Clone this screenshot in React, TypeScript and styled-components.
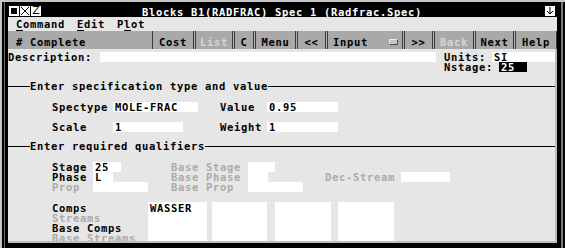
import React from 'react'
import styled, { createGlobalStyle } from 'styled-components'

const GlobalStyle = createGlobalStyle`
  html, body { margin: 0; padding: 0; }
  body {
    width: 565px;
    height: 248px;
    overflow: hidden;
    background: #c6c6c6;
    font-family: "DejaVu Sans Mono", "Liberation Mono", monospace;
    font-weight: bold;
    font-size: 10.5px;
    letter-spacing: 0.68px;
    color: #000;
  }
`

const Window = styled.div`
  box-sizing: border-box;
  width: 563px;
  height: 246px;
  margin: 2px 0 0 2px;
  padding: 1px 8px 5px 6px;
  background: #000;
  box-shadow: inset 2px 0 0 #000, inset 3px 0 0 #6a6a6a, inset -2px 0 0 #000, inset -4px 0 0 #7a7a7a;
  display: flex;
  flex-direction: column;
`

const TitleBar = styled.div`
  display: flex;
  align-items: flex-start;
  height: 14px;
  flex: none;
  background: #000;
  color: #fff;
  padding-left: 1px;
`

const WinButton = styled.span`
  box-sizing: border-box;
  width: 10px;
  height: 10px;
  margin: 3px 1px 0 0;
  background: #fff;
  color: #000;
  display: flex;
  align-items: center;
  justify-content: center;
  flex: none;
`

const Square = styled.span`
  width: 6px;
  height: 6px;
  background: #000;
`

const ZGlyph = styled.span`
  font-family: "DejaVu Sans", sans-serif;
  font-weight: normal;
  font-size: 11px;
  line-height: 10px;
  letter-spacing: 0;
`

const TitleText = styled.span`
  margin-left: 100px;
  padding-top: 4px;
  line-height: 10px;
  white-space: pre;
`

const ArrowBox = styled(WinButton)`
  margin: 3px 2px 0 auto;
`

const MenuBar = styled.div`
  box-sizing: border-box;
  display: flex;
  height: 14px;
  flex: none;
  padding: 2px 0 0 2px;
  background: #e6e6e6;
  line-height: 10px;
`

const MenuItem = styled.span`
  padding: 0 6px;
`

const Mnemonic = styled.span`
  text-decoration: underline;
  text-underline-offset: 2px;
  text-decoration-thickness: 1px;
`

const Toolbar = styled.div`
  display: flex;
  height: 18px;
  flex: none;
  background: #b4b4b4;
`

const Status = styled.div`
  box-sizing: border-box;
  width: 144px;
  padding: 6px 0 0 8px;
  line-height: 10px;
  background: #a9a9a9;
`

const ToolButton = styled.div<{ $w: number; $disabled?: boolean; $last?: boolean; $left?: boolean }>`
  box-sizing: border-box;
  display: flex;
  justify-content: ${p => (p.$left ? 'flex-start' : 'center')};
  width: ${p => p.$w}px;
  height: 18px;
  margin-right: ${p => (p.$last ? 0 : 1)}px;
  padding: 6px 0 0 ${p => (p.$left ? 5 : 0)}px;
  line-height: 10px;
  background: #a9a9a9;
  border-left: 1px solid #3c3c3c;
  border-right: 1px solid #3c3c3c;
  color: ${p => (p.$disabled ? '#d6d6d6' : '#000')};
`

const OptionBox = styled.span`
  box-sizing: border-box;
  width: 9px;
  height: 6px;
  margin: 2px 4px 0 auto;
  background: #c4c4c4;
  border-top: 1px solid #ececec;
  border-left: 1px solid #ececec;
  border-right: 1px solid #4a4a4a;
  border-bottom: 1px solid #4a4a4a;
`

const Content = styled.div`
  flex: 1;
  display: flex;
  flex-direction: column;
  overflow: hidden;
  background: #e6e6e6;
  border-right: 2px solid #bdbdbd;
  border-bottom: 2px solid #bdbdbd;
`

const TopArea = styled.div`
  display: flex;
  margin-top: 3px;
  line-height: 10px;
`

const DescLabel = styled.span`
  width: 92px;
  flex: none;
`

const Side = styled.div`
  display: grid;
  grid-auto-rows: 10px;
  margin-left: 8px;
  flex: 1;
`

const SideRow = styled.div`
  display: flex;
`

const Field = styled.span<{ $w?: number; $dark?: boolean }>`
  box-sizing: border-box;
  display: block;
  width: ${p => (p.$w ? `${p.$w}px` : 'auto')};
  flex: ${p => (p.$w ? 'none' : 1)};
  height: 10px;
  padding-left: 2px;
  line-height: 10px;
  background: ${p => (p.$dark ? '#000' : '#fff')};
  color: ${p => (p.$dark ? '#fff' : '#000')};
  white-space: pre;
`

const Heading = styled.div<{ $mt: number }>`
  display: flex;
  height: 10px;
  line-height: 10px;
  margin-top: ${p => p.$mt}px;
`

const Rule = styled.span<{ $w?: number }>`
  height: 1px;
  margin-top: 5px;
  background: #000;
  width: ${p => (p.$w ? `${p.$w}px` : 'auto')};
  flex: ${p => (p.$w ? 'none' : 1)};
`

const Rows = styled.div<{ $mt: number; $gap: number }>`
  display: flex;
  flex-direction: column;
  gap: ${p => p.$gap}px;
  margin-top: ${p => p.$mt}px;
`

const Row = styled.div`
  display: flex;
  height: 10px;
  line-height: 10px;
  padding-left: 44px;
`

const Label = styled.span<{ $w: number; $dim?: boolean }>`
  width: ${p => p.$w}px;
  flex: none;
  color: ${p => (p.$dim ? '#ababab' : '#000')};
  white-space: pre;
`

const Slot = styled.span<{ $w: number }>`
  width: ${p => p.$w}px;
  flex: none;
  display: flex;
`

const CompsBlock = styled.div`
  flex: 1;
  display: flex;
  margin-top: 10px;
  padding-left: 44px;
`

const CompsLabels = styled.div`
  width: 96px;
  flex: none;
  padding-top: 1px;
  line-height: 10px;
`

const CompsLabel = styled.div<{ $dim?: boolean }>`
  height: 10px;
  color: ${p => (p.$dim ? '#ababab' : '#000')};
`

const ListField = styled.div<{ $w: number; $ml: number }>`
  box-sizing: border-box;
  width: ${p => p.$w}px;
  margin-left: ${p => p.$ml}px;
  padding: 1px 0 0 2px;
  line-height: 10px;
  background: #fff;
`

const buttons = [
  { label: 'Cost', w: 42 },
  { label: 'List', w: 38, disabled: true },
  { label: 'C', w: 20 },
  { label: 'Menu', w: 41 },
  { label: '<<', w: 29 },
  { label: 'Input', w: 76, option: true },
  { label: '>>', w: 29 },
  { label: 'Back', w: 40, disabled: true },
  { label: 'Next', w: 39 },
  { label: 'Help', w: 42, last: true },
]

const lists = [
  { w: 59, ml: 0, text: 'WASSER' },
  { w: 55, ml: 5, text: '' },
  { w: 56, ml: 8, text: '' },
  { w: 56, ml: 7, text: '' },
]

export default function App() {
  return (
    <>
      <GlobalStyle />
      <Window>
        <TitleBar>
          <WinButton><Square /></WinButton>
          <WinButton>
            <svg width="10" height="10" viewBox="0 0 10 10">
              <path d="M1 1 L9 9 M9 1 L1 9" stroke="#000" strokeWidth="1" fill="none" />
            </svg>
          </WinButton>
          <WinButton><ZGlyph>Z</ZGlyph></WinButton>
          <TitleText>Blocks B1(RADFRAC) Spec 1 (Radfrac.Spec)</TitleText>
          <ArrowBox>
            <svg width="10" height="10" viewBox="0 0 10 10">
              <path d="M5 1 V8 M2 5 L5 8 L8 5" stroke="#000" strokeWidth="1" fill="none" />
            </svg>
          </ArrowBox>
        </TitleBar>

        <MenuBar>
          <MenuItem><Mnemonic>C</Mnemonic>ommand</MenuItem>
          <MenuItem><Mnemonic>E</Mnemonic>dit</MenuItem>
          <MenuItem>P<Mnemonic>l</Mnemonic>ot</MenuItem>
        </MenuBar>

        <Toolbar>
          <Status># Complete</Status>
          {buttons.map(b => (
            <ToolButton key={b.label} $w={b.w} $disabled={b.disabled} $last={b.last} $left={b.option}>
              {b.label}
              {b.option && <OptionBox />}
            </ToolButton>
          ))}
        </Toolbar>

        <Content>
          <TopArea>
            <DescLabel>Description:</DescLabel>
            <Field $w={336} />
            <Side>
              <SideRow>
                <Label $w={48}>Units:</Label>
                <Field>SI</Field>
              </SideRow>
              <SideRow>
                <Label $w={55}>Nstage:</Label>
                <Field $w={28} $dark>25</Field>
              </SideRow>
            </Side>
          </TopArea>

          <Heading $mt={9}>
            <Rule $w={22} />
            <span>Enter specification type and value</span>
            <Rule />
          </Heading>

          <Rows $mt={11} $gap={10}>
            <Row>
              <Label $w={61}>Spectype</Label>
              <Slot $w={107}><Field $w={85}>MOLE-FRAC</Field></Slot>
              <Label $w={47}>Value</Label>
              <Field $w={71}>0.95</Field>
            </Row>
            <Row>
              <Label $w={61}>Scale</Label>
              <Slot $w={107}><Field $w={70}>1</Field></Slot>
              <Label $w={47}>Weight</Label>
              <Field $w={71}>1</Field>
            </Row>
          </Rows>

          <Heading $mt={9}>
            <Rule $w={22} />
            <span>Enter required qualifiers</span>
            <Rule />
          </Heading>

          <Rows $mt={11} $gap={0}>
            <Row>
              <Label $w={41}>Stage</Label>
              <Slot $w={78}><Field $w={28}>25</Field></Slot>
              <Label $w={77} $dim>Base Stage</Label>
              <Slot $w={77}><Field $w={27} /></Slot>
            </Row>
            <Row>
              <Label $w={41}>Phase</Label>
              <Slot $w={78}><Field $w={20}>L</Field></Slot>
              <Label $w={77} $dim>Base Phase</Label>
              <Slot $w={77}><Field $w={20} /></Slot>
              <Label $w={76} $dim>Dec-Stream</Label>
              <Field $w={49} />
            </Row>
            <Row>
              <Label $w={41} $dim>Prop</Label>
              <Slot $w={78}><Field $w={55} /></Slot>
              <Label $w={77} $dim>Base Prop</Label>
              <Slot $w={77}><Field $w={55} /></Slot>
            </Row>
          </Rows>

          <CompsBlock>
            <CompsLabels>
              <CompsLabel>Comps</CompsLabel>
              <CompsLabel $dim>Streams</CompsLabel>
              <CompsLabel>Base Comps</CompsLabel>
              <CompsLabel $dim>Base Streams</CompsLabel>
            </CompsLabels>
            {lists.map((l, i) => (
              <ListField key={i} $w={l.w} $ml={l.ml}>{l.text}</ListField>
            ))}
          </CompsBlock>
        </Content>
      </Window>
    </>
  )
}
